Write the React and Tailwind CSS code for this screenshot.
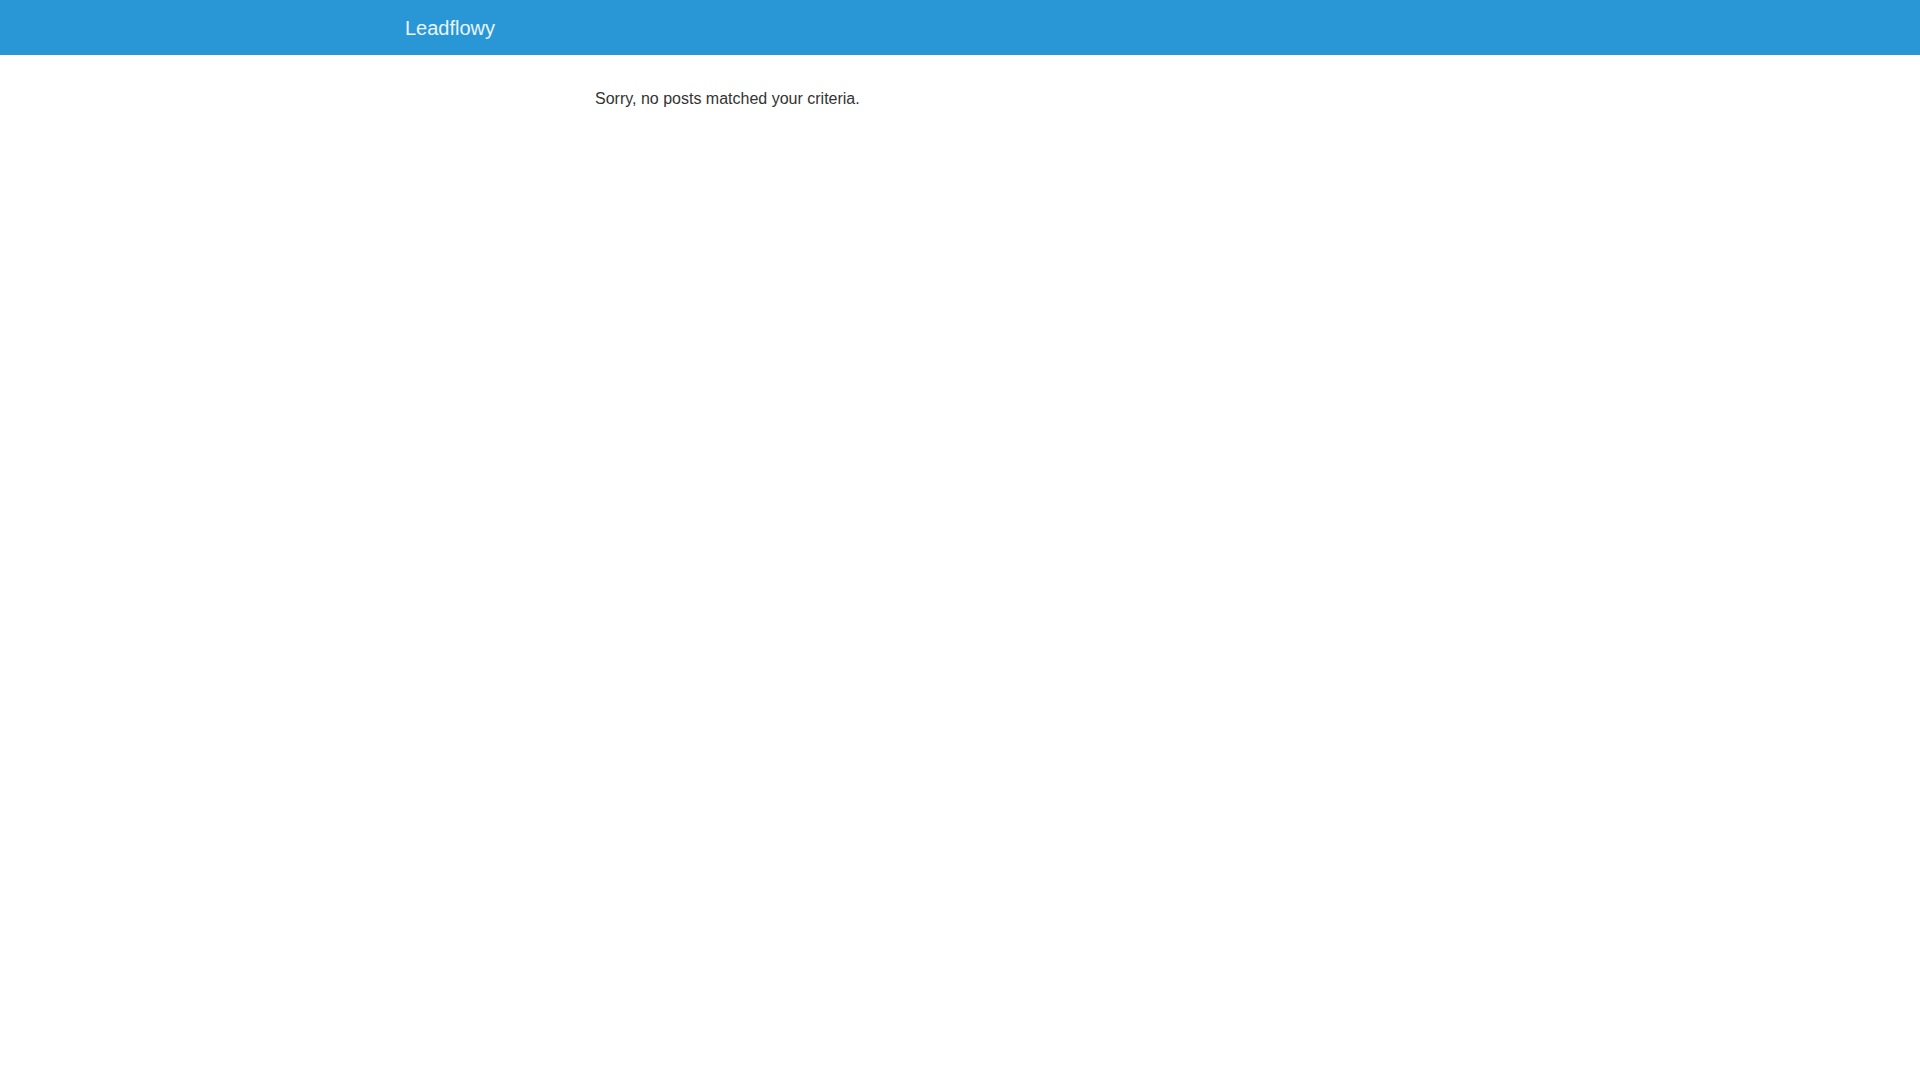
export default function App() {
  return (
    <div className="min-h-screen bg-white" style={{ fontFamily: '"Liberation Sans", Arial, sans-serif' }}>
      <header className="h-[55px] bg-[#2997d6]">
        <div className="mx-auto flex h-full w-[1140px] items-center px-[15px]">
          <a className="text-[20px] text-white/90">Leadflowy</a>
        </div>
      </header>
      <main className="mx-auto w-[1140px] px-[15px]">
        <div className="ml-[190px] w-[760px] pt-[32px]">
          <p className="text-[16px] leading-[24px] text-[#333]">Sorry, no posts matched your criteria.</p>
        </div>
      </main>
    </div>
  );
}
